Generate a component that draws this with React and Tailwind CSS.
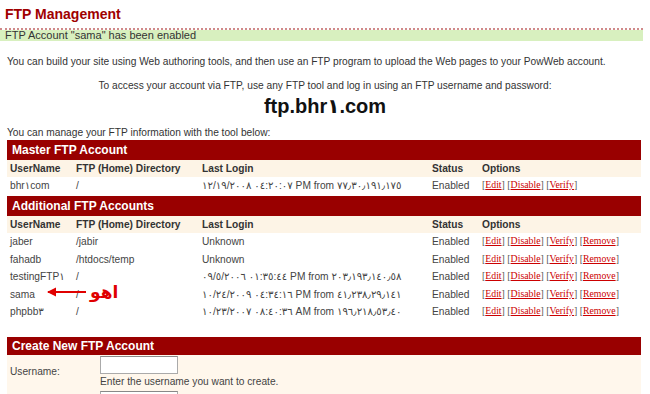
const font = "font-['Liberation_Sans','DejaVu_Sans',sans-serif]";

const cols = "grid grid-cols-[66px_126px_230px_50px_1fr] pl-[3px] items-center";

function Bar({ children, h = 'h-[20px]' }) {
  return (
    <div className={`flex ${h} items-center bg-[#990000] pl-[5px] text-[12px] font-bold text-white`}>
      {children}
    </div>
  );
}

function HeadRow() {
  return (
    <div className={`${cols} h-[17px] bg-[#fdf4e6] text-[10.2px] font-bold text-[#333]`}>
      <span>UserName</span>
      <span>FTP (Home) Directory</span>
      <span>Last Login</span>
      <span>Status</span>
      <span>Options</span>
    </div>
  );
}

function Lnk({ children }) {
  return (
    <>
      [<span className="text-[#cc0000] underline">{children}</span>]
    </>
  );
}

function Options({ remove }) {
  return (
    <span className="whitespace-nowrap font-['Liberation_Serif',serif] text-[9.8px] text-[#555]">
      <Lnk>Edit</Lnk> <Lnk>Disable</Lnk> <Lnk>Verify</Lnk>
      {remove && (
        <>
          {' '}
          <Lnk>Remove</Lnk>
        </>
      )}
    </span>
  );
}

function Row({ user, dir, login, remove, h = 'h-[17.5px]', children }) {
  return (
    <div className={`${cols} ${h} relative text-[10.2px] text-[#444]`}>
      <span>{user}</span>
      <span>{dir}</span>
      <span dir="ltr" className="[unicode-bidi:bidi-override] whitespace-nowrap">
        {login}
      </span>
      <span>Enabled</span>
      <Options remove={remove} />
      {children}
    </div>
  );
}

export default function App() {
  return (
    <div className={`${font} h-[394px] w-[650px] overflow-hidden bg-white`}>
      <h1 className="pl-[5px] pt-[6px] text-[14px] font-bold leading-[17px] text-[#a00000]">
        FTP Management
      </h1>
      <div className="mt-[5px] w-[643px] border-t-2 border-dotted border-[#d08a8a]" />
      <div className="flex h-[11px] w-[643px] items-center bg-[#d8f0bf] pl-[5px] text-[11px] text-[#333]">
        FTP Account "sama" has been enabled
      </div>

      <p className="mt-[14px] pl-[7px] text-[10.2px] leading-[13px] text-[#333]">
        You can build your site using Web authoring tools, and then use an FTP program to upload the Web pages to your PowWeb account.
      </p>
      <p className="mt-[11px] text-center text-[10.2px] leading-[13px] text-[#333]">
        To access your account via FTP, use any FTP tool and log in using an FTP username and password:
      </p>
      <p className="mt-[3px] text-center text-[20px] font-bold leading-[22px] text-[#111]">ftp.bhr١.com</p>
      <p className="mt-[9px] pl-[7px] text-[10.2px] leading-[13px] text-[#333]">
        You can manage your FTP information with the tool below:
      </p>

      <div className="mt-[1px] w-[641px] pl-[7px]">
        <Bar>Master FTP Account</Bar>
        <HeadRow />
        <Row user="bhr١com" dir="/" login="١٢/١٩/٢٠٠٨ ٠٤:٢٠:٠٧ PM from ٧٧٫٣٠٫١٩١٫١٧٥" h="h-[17px]" />

        <div className="mt-[2px]">
          <Bar>Additional FTP Accounts</Bar>
        </div>
        <HeadRow />
        <Row user="jaber" dir="/jabir" login="Unknown" remove />
        <Row user="fahadb" dir="/htdocs/temp" login="Unknown" remove />
        <Row user="testingFTP١" dir="/" login="٠٩/٥/٢٠٠٦ ٠١:٣٥:٤٤ PM from ٢٠٣٫١٩٣٫١٤٠٫٥٨" remove />
        <Row user="sama" dir="/" login="١٠/٢٤/٢٠٠٩ ٠٤:٣٤:١٦ PM from ٤١٫٢٣٨٫٢٩٫١٤١" remove>
          <div className="absolute left-[39px] top-[-3px] flex items-center">
            <svg width="42" height="12" viewBox="0 0 42 12">
              <path d="M2 6 L40 6" stroke="#e00000" strokeWidth="2" />
              <path d="M1 6 L10 1.5 L10 10.5 Z" fill="#e00000" />
            </svg>
            <span dir="rtl" className="ml-[2px] font-['DejaVu_Sans',sans-serif] text-[17px] font-bold leading-[18px] text-[#e00000]">
              اهو
            </span>
          </div>
        </Row>
        <Row user="phpbb٣" dir="/" login="١٠/٢٣/٢٠٠٧ ٠٨:٤٠:٣٦ AM from ١٩٦٫٢١٨٫٥٣٫٤٠" remove />

        <div className="mt-[16px]">
          <Bar h="h-[18px]">Create New FTP Account</Bar>
        </div>
        <div className="h-[60px] bg-[#fff7ec] pl-[3px]">
          <div className="grid grid-cols-[90px_1fr] pt-[1px]">
            <span className="pt-[8px] text-[10.2px] text-[#444]">Username:</span>
            <div>
              <div className="h-[18px] w-[78px] border border-[#aaa] border-t-[#888] bg-white" />
              <p className="mt-[1px] text-[10.2px] leading-[13px] text-[#444]">
                Enter the username you want to create.
              </p>
              <div className="mt-[3px] h-[18px] w-[78px] border border-[#aaa] border-t-[#888] bg-white" />
            </div>
          </div>
        </div>
      </div>
    </div>
  );
}
